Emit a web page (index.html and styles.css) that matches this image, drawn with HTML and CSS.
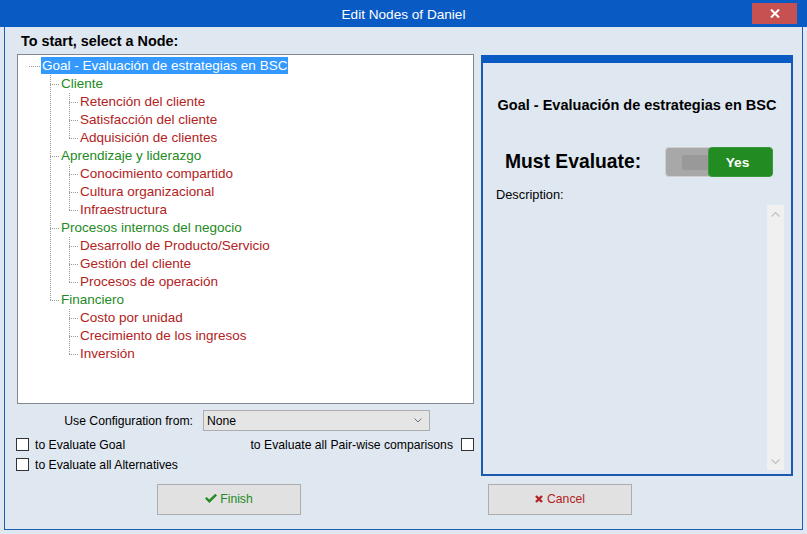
FILE: index.html
```
<!DOCTYPE html>
<html lang="en">
<head>
<meta charset="utf-8">
<title>Edit Nodes of Daniel</title>
<link rel="stylesheet" href="styles.css">
</head>
<body>
<div class="titlebar">
  <span class="title">Edit Nodes of Daniel</span>
  <div class="close">
    <svg width="10" height="9" viewBox="0 0 10 9"><path d="M1 0.5 L9 8.5 M9 0.5 L1 8.5" stroke="#fff" stroke-width="2" fill="none"/></svg>
  </div>
</div>
<div class="frame">
  <div class="main">
    <div class="left">
      <div class="heading">To start, select a Node:</div>
      <div class="treebox">
        <ul class="tree">
          <li class="node root"><span class="label sel">Goal - Evaluación de estrategias en BSC</span>
            <ul>
              <li class="node"><span class="label cat">Cliente</span>
                <ul>
                  <li class="node"><span class="label leaf">Retención del cliente</span></li>
                  <li class="node"><span class="label leaf">Satisfacción del cliente</span></li>
                  <li class="node"><span class="label leaf">Adquisición de clientes</span></li>
                </ul>
              </li>
              <li class="node"><span class="label cat">Aprendizaje y liderazgo</span>
                <ul>
                  <li class="node"><span class="label leaf">Conocimiento compartido</span></li>
                  <li class="node"><span class="label leaf">Cultura organizacional</span></li>
                  <li class="node"><span class="label leaf">Infraestructura</span></li>
                </ul>
              </li>
              <li class="node"><span class="label cat">Procesos internos del negocio</span>
                <ul>
                  <li class="node"><span class="label leaf">Desarrollo de Producto/Servicio</span></li>
                  <li class="node"><span class="label leaf">Gestión del cliente</span></li>
                  <li class="node"><span class="label leaf">Procesos de operación</span></li>
                </ul>
              </li>
              <li class="node"><span class="label cat">Financiero</span>
                <ul>
                  <li class="node"><span class="label leaf">Costo por unidad</span></li>
                  <li class="node"><span class="label leaf">Crecimiento de los ingresos</span></li>
                  <li class="node"><span class="label leaf">Inversión</span></li>
                </ul>
              </li>
            </ul>
          </li>
        </ul>
      </div>
      <div class="config">
        <span class="config-label">Use Configuration from:</span>
        <div class="select">
          <span>None</span>
          <svg width="8" height="5" viewBox="0 0 8 5"><path d="M0.5 0.5 L4 4 L7.5 0.5" stroke="#707070" stroke-width="1" fill="none"/></svg>
        </div>
      </div>
      <div class="checkrow">
        <label class="check"><span class="box"></span><span>to Evaluate Goal</span></label>
        <label class="check"><span>to Evaluate all Pair-wise comparisons</span><span class="box"></span></label>
      </div>
      <div class="checkrow second">
        <label class="check"><span class="box"></span><span>to Evaluate all Alternatives</span></label>
      </div>
    </div>
    <div class="panel">
      <div class="panel-title">Goal - Evaluación de estrategias en BSC</div>
      <div class="must">
        <span class="must-label">Must Evaluate:</span>
        <div class="toggle">
          <span class="knob"></span>
          <span class="on">Yes</span>
        </div>
      </div>
      <div class="desc-label">Description:</div>
      <div class="desc">
        <div class="scroll">
          <svg width="9" height="5" viewBox="0 0 9 5"><path d="M0.5 4.5 L4.5 0.5 L8.5 4.5" stroke="#c2c2c2" stroke-width="1.2" fill="none"/></svg>
          <svg width="9" height="5" viewBox="0 0 9 5"><path d="M0.5 0.5 L4.5 4.5 L8.5 0.5" stroke="#c2c2c2" stroke-width="1.2" fill="none"/></svg>
        </div>
      </div>
    </div>
  </div>
  <div class="buttons">
    <div class="btn finish">
      <svg width="12" height="9" viewBox="0 0 12 9"><polygon points="0,4.6 1.7,2.9 4.3,5.5 10.3,-0.3 12,1.4 4.3,9" fill="#228b22"/></svg>
      <span>Finish</span>
    </div>
    <div class="btn cancel">
      <svg width="8" height="8" viewBox="0 0 8 8"><path d="M1 1 L7 7 M7 1 L1 7" stroke="#b22222" stroke-width="2.4" fill="none"/></svg>
      <span>Cancel</span>
    </div>
  </div>
</div>
</body>
</html>
```
FILE: styles.css
```
html, body {
  margin: 0;
  padding: 0;
}
body {
  width: 807px;
  height: 534px;
  overflow: hidden;
  background: #dfe7f0;
  font-family: "Liberation Sans", Arial, sans-serif;
  color: #000;
}
.titlebar {
  position: relative;
  height: 27px;
  box-sizing: border-box;
  padding-top: 3px;
  background: #0a5ac4;
  color: #fff;
  text-align: center;
  font-size: 13.6px;
  line-height: 24px;
}
.close {
  position: absolute;
  left: 752px;
  top: 3px;
  width: 45px;
  height: 21px;
  background: #c75050;
  display: flex;
  align-items: center;
  justify-content: center;
}
.frame {
  margin: 0 4px 0 4px;
  height: 503px;
  box-sizing: border-box;
  border: 1px solid #1a5db5;
  border-top: none;
}
.main {
  display: flex;
  padding-left: 12px;
  gap: 7px;
}
.left {
  width: 457px;
  display: flex;
  flex-direction: column;
}
.heading {
  padding: 5px 0 0 4px;
  line-height: 18px;
  margin-bottom: 4px;
  font-size: 14.4px;
  font-weight: bold;
}
.treebox {
  height: 350px;
  box-sizing: border-box;
  background: #fff;
  border: 1px solid #828790;
  font-size: 13.5px;
}
.tree, .tree ul {
  list-style: none;
  margin: 0;
  padding: 0;
}
.tree {
  padding: 2px 0 0 23px;
}
.tree ul {
  padding-left: 19px;
}
.node {
  position: relative;
}
.label {
  display: block;
  width: fit-content;
  height: 18px;
  line-height: 18px;
  padding: 0 1px;
  white-space: nowrap;
}
.label.sel {
  height: 17px;
  line-height: 17px;
  margin-bottom: 1px;
  background: #3399ff;
  color: #fff;
}
.label.cat { color: #228b22; }
.label.leaf { color: #b22222; }
.node::before {
  content: "";
  position: absolute;
  left: -10px;
  top: 9px;
  width: 9px;
  height: 1px;
  background: repeating-linear-gradient(to right, #9a9a9a 0 1px, transparent 1px 2px);
}
.tree > .node::before {
  left: -12px;
  width: 11px;
}
.tree ul > .node::after {
  content: "";
  position: absolute;
  left: -10px;
  top: 0;
  bottom: 0;
  width: 1px;
  background: repeating-linear-gradient(to bottom, #9a9a9a 0 1px, transparent 1px 2px);
}
.tree ul > .node:last-child::after {
  bottom: auto;
  height: 10px;
}
.config {
  margin-top: 6px;
  height: 21px;
  display: flex;
  align-items: center;
  gap: 10px;
  font-size: 12.2px;
}
.config-label {
  width: 176px;
  text-align: right;
}
.select {
  width: 227px;
  height: 21px;
  box-sizing: border-box;
  background: #e5e5e5;
  border: 1px solid #adadad;
  display: flex;
  align-items: center;
  justify-content: space-between;
  padding: 0 7px 0 3px;
}
.checkrow {
  margin-top: 7px;
  margin-left: -1px;
  height: 13px;
  display: flex;
  justify-content: space-between;
  align-items: center;
  font-size: 12.2px;
}
.check {
  display: flex;
  align-items: center;
  gap: 6px;
  white-space: nowrap;
}
.check:last-child:not(:first-child) {
  gap: 8px;
}
.box {
  width: 13px;
  height: 13px;
  box-sizing: border-box;
  border: 1px solid #333;
  background: #fff;
}
.panel {
  margin-top: 28px;
  width: 312px;
  height: 421px;
  box-sizing: border-box;
  border: 2px solid #1a5aae;
  border-top: 8px solid #0a5ac4;
}
.panel-title {
  margin-top: 32px;
  line-height: 20px;
  text-align: center;
  font-size: 14.5px;
  font-weight: bold;
}
.must {
  margin-top: 32px;
  height: 30px;
  display: flex;
  align-items: center;
  padding-left: 22px;
}
.must-label {
  width: 160px;
  font-size: 19.3px;
  font-weight: bold;
}
.toggle {
  width: 108px;
  height: 30px;
  box-sizing: border-box;
  background: #a8a8a8;
  border: 1px solid #cfcfcf;
  border-radius: 4px;
  display: flex;
  align-items: center;
  padding-left: 16px;
}
.knob {
  width: 30px;
  height: 15px;
  margin-right: -4px;
  background: #999;
  border-radius: 2px;
}
.on {
  margin-left: auto;
  width: 65px;
  height: 30px;
  margin-right: -1px;
  box-sizing: border-box;
  padding-right: 6px;
  background: #228b22;
  border: 1px solid #3a9a3a;
  border-radius: 4px;
  color: #fff;
  font-weight: bold;
  font-size: 13.7px;
  display: flex;
  align-items: center;
  justify-content: center;
}
.desc-label {
  margin-top: 10px;
  padding-left: 13px;
  line-height: 16px;
  font-size: 12.8px;
}
.desc {
  margin: 2px 0 0 13px;
  width: 288px;
  height: 265px;
  display: flex;
  justify-content: flex-end;
}
.scroll {
  width: 17px;
  height: 265px;
  background: #f0f0f0;
  display: flex;
  flex-direction: column;
  justify-content: space-between;
  align-items: center;
  padding: 7px 0 6px;
  box-sizing: border-box;
}
.buttons {
  margin-top: 8px;
  padding-left: 152px;
  display: flex;
  gap: 187px;
}
.btn {
  width: 144px;
  height: 31px;
  box-sizing: border-box;
  padding-bottom: 2px;
  background: #e1e1e1;
  border: 1px solid #adadad;
  display: flex;
  align-items: center;
  justify-content: center;
  font-size: 12.2px;
}
.finish { color: #228b22; gap: 3px; }
.cancel { color: #b22222; gap: 4px; }
```
